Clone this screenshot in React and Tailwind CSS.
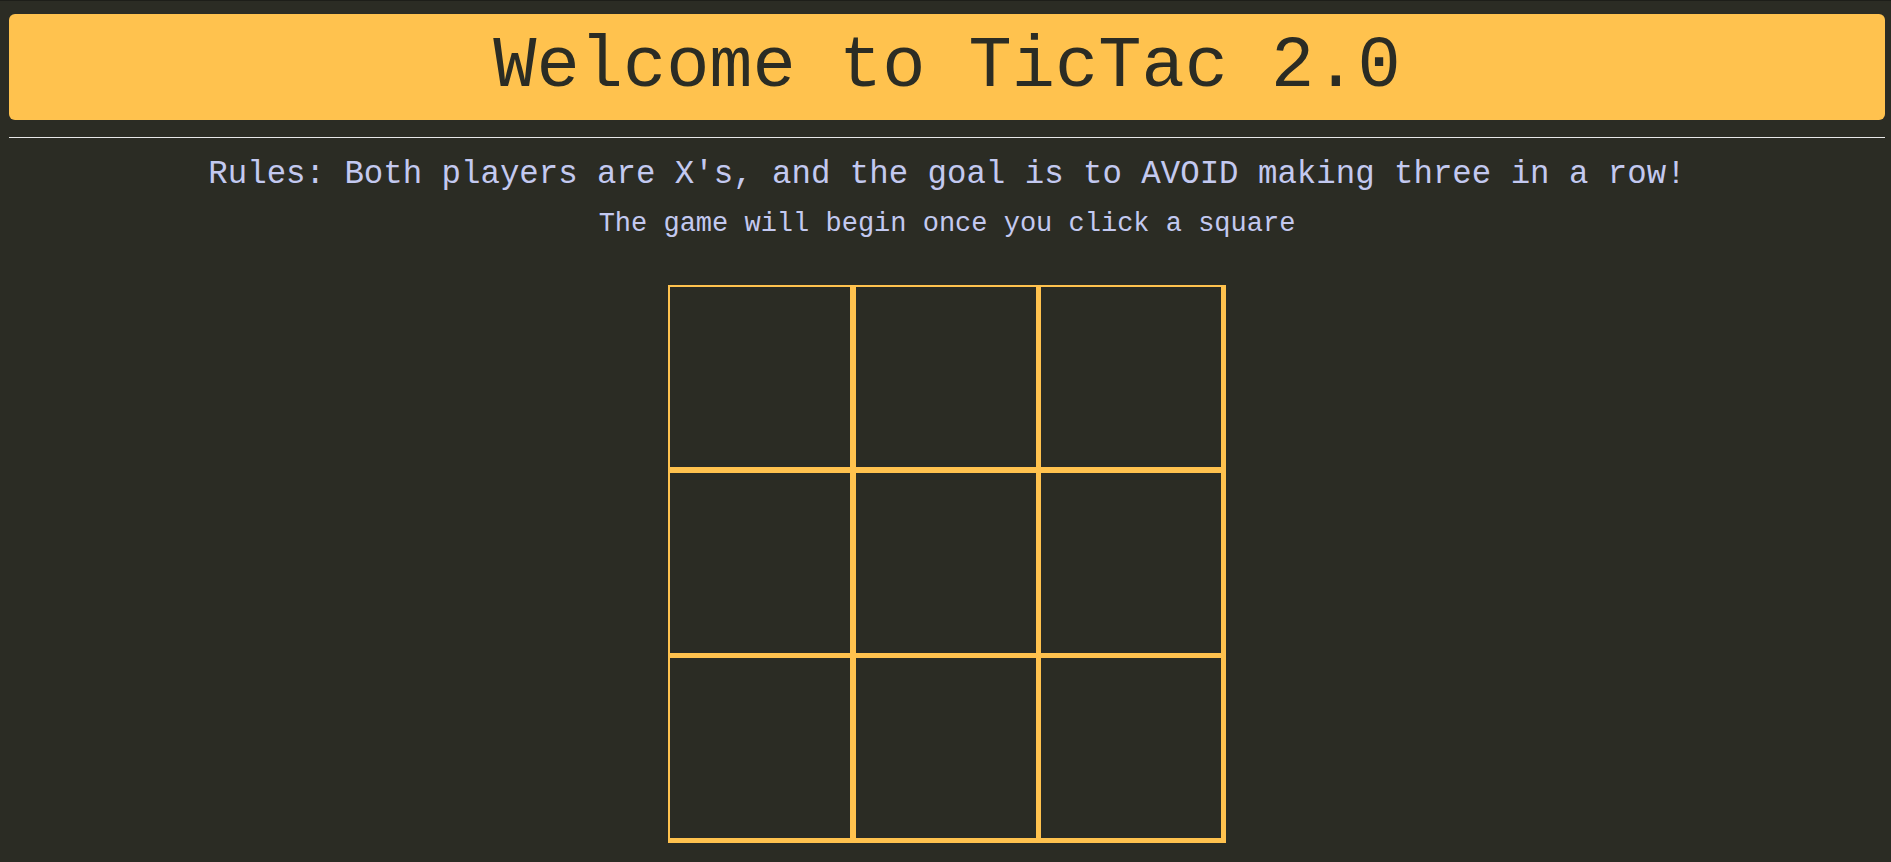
export default function App() {
  const cells = Array.from({ length: 9 }, (_, i) => i);
  return (
    <div
      className="min-h-screen bg-[#2b2c24] border-t border-[#1d1e19] text-[#c3c9f0]"
      style={{ fontFamily: '"Liberation Mono", "Courier New", monospace' }}
    >
      <div className="pt-[13px] pl-[9px] pr-[6px]">
        <div className="h-[106px] rounded-[6px] bg-[#ffc24e] flex items-center justify-center text-[72px] text-[#2b2c24] leading-none">
          Welcome to TicTac 2.0
        </div>
        <div className="mt-[17px] h-px bg-[#e8e8e8]" />
        <div className="mt-[18px] text-center text-[32.4px] leading-[37px]">
          Rules: Both players are X's, and the goal is to AVOID making three in a row!
        </div>
        <div className="mt-[16px] text-center text-[27px] leading-[31px]">
          The game will begin once you click a square
        </div>
      </div>
      <div className="flex justify-center pl-[3px] mt-[45px]">
        <div className="grid grid-cols-[186px_185px_185px] border-l-2 border-t-2 border-[#ffc24e]">
          {cells.map((i) => {
            const col = i % 3;
            const row = Math.floor(i / 3);
            const w = col === 0 ? "w-[186px] border-r-[6px]" : "w-[185px] border-r-[5px]";
            const h = row === 0 ? "h-[186px] border-b-[6px]" : "h-[185px] border-b-[5px]";
            return (
              <button
                key={i}
                className={`${w} ${h} bg-[#2b2c24] border-[#ffc24e] border-solid cursor-pointer`}
              />
            );
          })}
        </div>
      </div>
    </div>
  );
}
